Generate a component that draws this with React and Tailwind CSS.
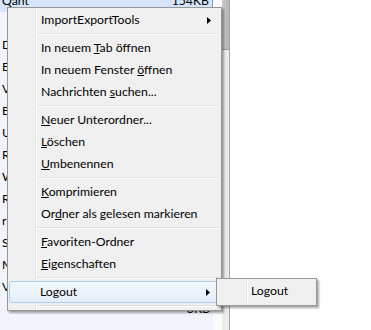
import React from 'react';

const rows = [
  { left: 'Qant', right: '154KB', selected: true },
  { left: '', right: '' },
  { left: 'DE', right: '' },
  { left: 'EN', right: '' },
  { left: 'VI', right: '' },
  { left: 'BI', right: '' },
  { left: 'U', right: '' },
  { left: 'RD', right: '' },
  { left: 'W', right: '' },
  { left: 'Rt', right: '' },
  { left: 'r', right: '' },
  { left: 'S\\', right: '' },
  { left: 'M', right: '' },
  { left: 'V', right: '' },
  { left: '', right: '3KB' },
];

function Arrow() {
  return (
    <svg width="4" height="7" viewBox="0 0 4 7" className="ml-auto mr-[9px]">
      <path d="M0 0 L4 3.5 L0 7 Z" fill="#000" />
    </svg>
  );
}

function Item({ children, sub, hover }) {
  return (
    <div
      className={
        'h-[22px] flex items-center text-[12.25px] text-black ' +
        (hover
          ? 'rounded-[3px] border border-[#aecdf3] bg-[linear-gradient(#f3f8fe,#e3eefb)] pl-[30px]'
          : 'pl-[32px]')
      }
    >
      <span>{children}</span>
      {sub && <Arrow />}
    </div>
  );
}

function Sep() {
  return (
    <div className="h-[6px] flex flex-col justify-center ml-[28px] mr-[1px]">
      <div className="h-px bg-[#e0e0e0]" />
      <div className="h-px bg-white" />
    </div>
  );
}

export default function App() {
  return (
    <div className="relative w-[371px] h-[330px] bg-white overflow-hidden font-['Segoe_UI','Lato',sans-serif] text-[12.25px]">
      {/* Background list */}
      <div className="flex h-full">
        <div className="w-[213px] bg-[#f1f4fa] -mt-[10px]">
          {rows.map((r, i) => (
            <div
              key={i}
              className={
                'h-[22px] flex items-center justify-between pr-[3px] ' +
                (r.selected ? 'bg-[#d5e6fa] border-r border-[#7da2ce]' : '')
              }
            >
              <span className="-ml-[1px] pl-[3px] text-black">{r.left}</span>
              <span className="text-black">{r.right}</span>
            </div>
          ))}
        </div>
        <div className="w-[9px] bg-[#fafbfd]" />
        <div className="w-[7px] flex flex-col bg-[#ececec]">
          <div className="h-[50px] bg-[linear-gradient(to_right,#c9c9c9,#b5b5b5)] border-b border-[#9a9a9a]" />
        </div>
        <div className="w-px bg-[#a7a7a7]" />
        <div className="flex-1 bg-white" />
      </div>

      {/* Context menu */}
      <div className="absolute left-[7px] top-[7px] w-[215px] border border-[#979797] p-[1px] shadow-[2px_2px_2px_rgba(0,0,0,0.35)] bg-[linear-gradient(to_right,#f0f0f0_27px,#e2e3e3_27px,#e2e3e3_28px,#ffffff_28px,#ffffff_29px,#f0f0f0_29px)]">
        <Item sub>ImportExportTools</Item>
        <Sep />
        <Item>In neuem <u>T</u>ab öffnen</Item>
        <Item>In neuem Fenster <u>ö</u>ffnen</Item>
        <Item>Nachrichten <u>s</u>uchen...</Item>
        <Sep />
        <Item><u>N</u>euer Unterordner...</Item>
        <Item><u>L</u>öschen</Item>
        <Item><u>U</u>mbenennen</Item>
        <Sep />
        <Item><u>K</u>omprimieren</Item>
        <Item>Or<u>d</u>ner als gelesen markieren</Item>
        <Sep />
        <Item><u>F</u>avoriten-Ordner</Item>
        <Item><u>E</u>igenschaften</Item>
        <Sep />
        <Item sub hover>Logout</Item>
        <Sep />
      </div>

      {/* Submenu */}
      <div className="absolute left-[216px] top-[278px] w-[101px] h-[28px] border border-[#979797] p-[2px] shadow-[2px_2px_2px_rgba(0,0,0,0.35)] bg-[linear-gradient(to_right,#f0f0f0_29px,#e2e3e3_29px,#e2e3e3_30px,#ffffff_30px,#ffffff_31px,#f0f0f0_31px)]">
        <div className="h-[22px] -mt-px flex items-center pl-[32px] text-[12.25px] text-black">Logout</div>
      </div>
    </div>
  );
}
